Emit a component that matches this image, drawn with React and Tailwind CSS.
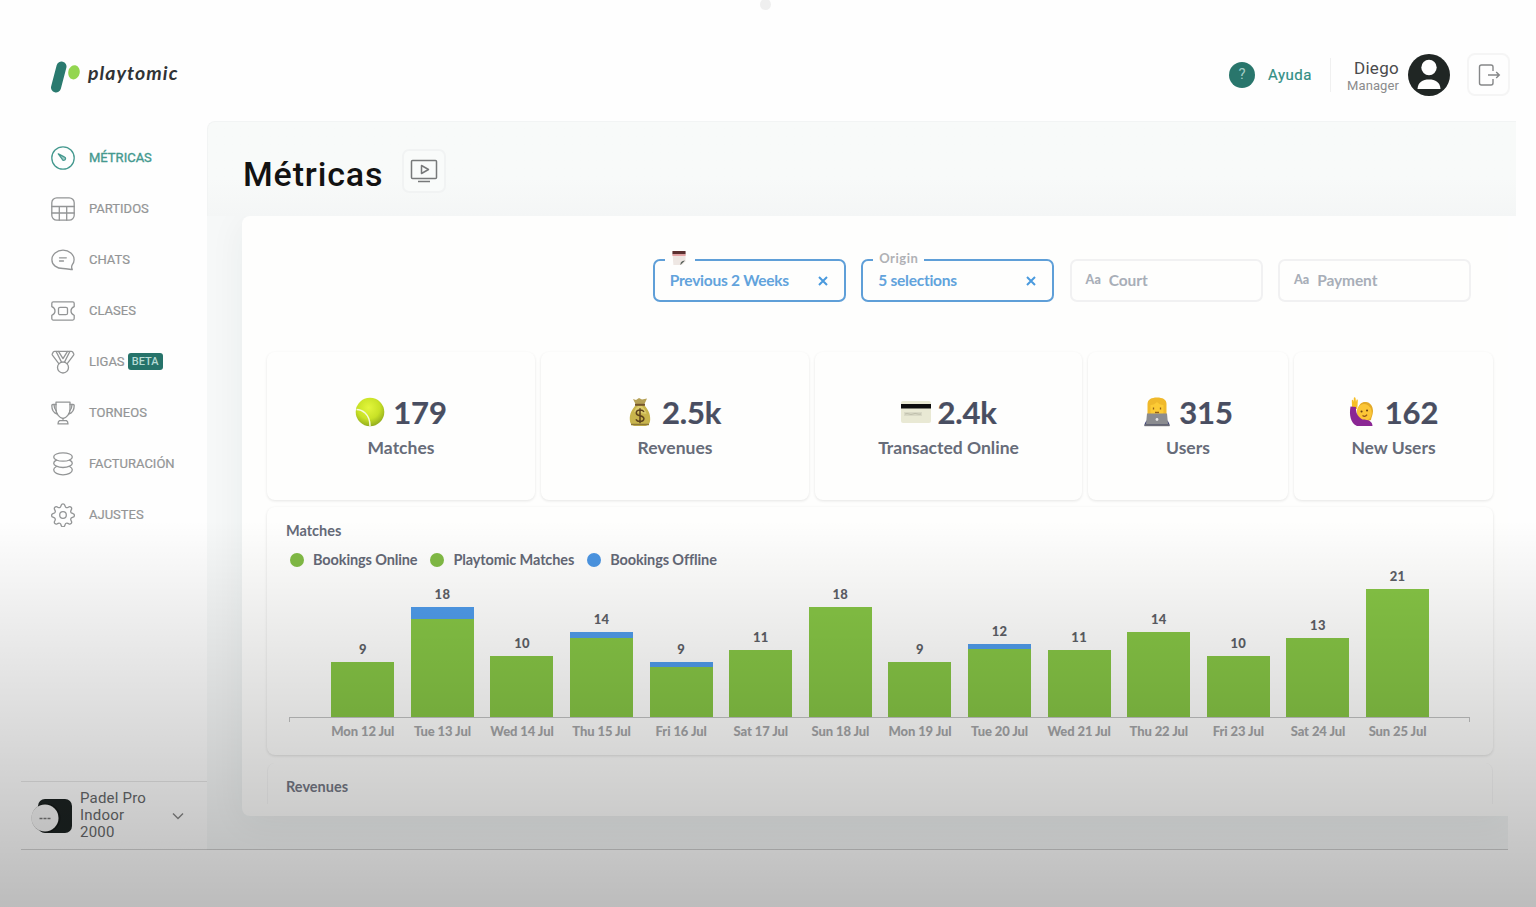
import React from "react";

const DAYS = [
  ["Mon 12 Jul", 9, 0],
  ["Tue 13 Jul", 18, 2],
  ["Wed 14 Jul", 10, 0],
  ["Thu 15 Jul", 14, 1],
  ["Fri 16 Jul", 9, 0.8],
  ["Sat 17 Jul", 11, 0],
  ["Sun 18 Jul", 18, 0],
  ["Mon 19 Jul", 9, 0],
  ["Tue 20 Jul", 12, 0.8],
  ["Wed 21 Jul", 11, 0],
  ["Thu 22 Jul", 14, 0],
  ["Fri 23 Jul", 10, 0],
  ["Sat 24 Jul", 13, 0],
  ["Sun 25 Jul", 21, 0],
];
const UNIT = 6.1;

function Icon({ children, className = "size-6" }) {
  return (
    <svg viewBox="0 0 24 24" className={className} fill="none" stroke="currentColor" strokeWidth="1.3" strokeLinecap="round" strokeLinejoin="round">
      {children}
    </svg>
  );
}

const ICONS = {
  gauge: (
    <>
      <circle cx="12" cy="12" r="11.2" />
      <path d="M7.3 7.8l5.9 3a1.8 1.8 0 1 1-2.2 2.1z" fill="currentColor" fillOpacity=".5" />
    </>
  ),
  table: (
    <>
      <rect x=".8" y=".8" width="22.4" height="22.4" rx="5" />
      <path d="M.8 9.5h22.4M.8 16h22.4M8.3 9.5v13.7M15.7 9.5v13.7" />
    </>
  ),
  chat: (
    <>
      <path d="M21 20.8c-.6-1.3-.4-2.7.2-3.9 1.2-1.5 1.9-3.2 1.9-5.1C23.100 6.300 18.200 2.200 12 2.200S.9 6.300.9 11.700 5.800 20.500 12 20.500c3 0 5.900.7 9.300 1.200z" />
      <path d="M8.500 9.800h6.800M8.500 13h4" />
    </>
  ),
  ticket: (
    <>
      <path d="M2.300 2.900h19.400c.9 0 1.500.7 1.500 1.500v3.300c-4.300 1.700-4.300 6.900 0 8.600v3.300c0 .8-.6 1.500-1.500 1.500H2.300c-.9 0-1.500-.7-1.500-1.500v-3.300c4.300-1.700 4.300-6.900 0-8.600V4.400c0-.8.6-1.500 1.500-1.500z" />
      <rect x="7.500" y="8.300" width="9" height="7.400" rx="1.500" />
    </>
  ),
  medal: (
    <>
      <circle cx="12" cy="17.500" r="5.500" />
      <path d="M7.800 13.700L1.400 5.200c-.4-.6-.3-1.100 0-1.600l1-1.700c.3-.4.7-.6 1.200-.6h16.800c.5 0 .9.200 1.200.6l1 1.700c.3.500.4 1 0 1.600l-6.400 8.500M5 1.300l5.400 10.600M19 1.300l-5.400 10.600M7.500 1.300L12 8.600l4.500-7.300" />
    </>
  ),
  trophy: (
    <>
      <path d="M5 1.200h14v7c0 4.800-3.500 8.500-7 9.300-3.500-.8-7-4.500-7-9.300zM12 17.500v2.200M8.500 19.700h7c1 .5 1.500 1.800 1.500 3.200H7c0-1.400.5-2.700 1.500-3.200z" />
      <path d="M5 3.500H1.900c-.7 0-1.100.4-1.100 1.100 0 4 1.600 7.400 5.400 8.400M19 3.500h3.100c.7 0 1.100.4 1.100 1.100 0 4-1.600 7.400-5.400 8.400M3 3.500c0 3 .8 5 2.300 6.500M21 3.500c0 3-.8 5-2.300 6.500" />
    </>
  ),
  coins: (
    <>
      <ellipse cx="12" cy="5" rx="9.300" ry="4.200" />
      <path d="M5.500 8.200c-1.800.8-2.800 1.900-2.800 3 0 2.300 4.200 4.300 9.300 4.300s9.300-2 9.300-4.300c0-1.100-1-2.200-2.800-3M5.500 14.500c-1.800.8-2.800 2-2.800 3.300 0 2.900 4.200 5 9.300 5s9.300-2.100 9.300-5c0-1.300-1-2.500-2.800-3.300" />
    </>
  ),
  gear: (
    <>
      <circle cx="12" cy="12" r="3.300" />
      <path d="M10.200 2.200a1.900 1.900 0 0 1 3.600 0l.4 1.200a1.900 1.900 0 0 0 2.600 1.100l1.200-.6a1.900 1.900 0 0 1 2.500 2.500l-.6 1.200a1.900 1.900 0 0 0 1.100 2.600l1.100.4a1.900 1.900 0 0 1 0 3.600l-1.200.4a1.900 1.900 0 0 0-1 2.600l.6 1.200a1.900 1.900 0 0 1-2.500 2.500l-1.200-.6a1.900 1.900 0 0 0-2.600 1.100l-.4 1.100a1.900 1.900 0 0 1-3.600 0l-.4-1.200a1.900 1.900 0 0 0-2.600-1l-1.200.6A1.900 1.900 0 0 1 3.500 18.400l.6-1.200A1.900 1.900 0 0 0 3 14.600l-1.100-.4a1.900 1.900 0 0 1 0-3.600L3.100 10.200a1.900 1.900 0 0 0 1-2.600l-.6-1.200A1.900 1.900 0 0 1 6 3.900l1.200.6a1.900 1.900 0 0 0 2.600-1.100z" />
    </>
  ),
};

const NAV = [
  ["gauge", "MÉTRICAS"],
  ["table", "PARTIDOS"],
  ["chat", "CHATS"],
  ["ticket", "CLASES"],
  ["medal", "LIGAS"],
  ["trophy", "TORNEOS"],
  ["coins", "FACTURACIÓN"],
  ["gear", "AJUSTES"],
];

function Ball() {
  return (
    <svg viewBox="0 0 30 30" className="w-[30px] h-[30px]">
      <defs>
        <radialGradient id="ball" cx=".45" cy=".35" r=".65">
          <stop offset="0" stopColor="#e3f63c" />
          <stop offset=".6" stopColor="#c9e226" />
          <stop offset="1" stopColor="#93ad1e" />
        </radialGradient>
      </defs>
      <circle cx="15" cy="15" r="14.300" fill="url(#ball)" />
      <path d="M1.500 12.500c5 0 13.500 4 13.500 16.500" fill="none" stroke="#f6fadc" strokeWidth="1.500" />
    </svg>
  );
}
function MoneyBag() {
  return (
    <svg viewBox="0 0 22 30" className="w-[22px] h-[30px]">
      <path d="M4 2l3 1 3-2 3 1.500L18 1.500 15 8H7z" fill="#b5a055" />
      <path d="M7 8h8c4 4 6.500 9 6.200 14.500-.2 5-2.700 6.500-6.200 6.500H7c-3.500 0-6-1.500-6.200-6.500C.5 17 3 12 7 8z" fill="#c8b44c" />
      <path d="M5 15c1-3 2.500-5 4-6h4c2 2 4 5 4.500 8" fill="#dccb6d" />
      <path d="M6 7.800h10" stroke="#73552c" strokeWidth="2" />
      <path d="M15 14.800c-1-1.500-2.500-1.700-4-1.700-2 0-3.700 1-3.700 2.800 0 4 7.600 1.700 7.600 5.700 0 1.900-1.800 2.900-3.900 2.900-1.800 0-3.300-.6-4.100-2.200M11 11.300v15" fill="none" stroke="#5d421c" strokeWidth="1.500" />
      <path d="M2 27.500h18" stroke="#8d7936" strokeWidth="1.500" />
    </svg>
  );
}
function Card() {
  return (
    <svg viewBox="0 0 32 24" className="w-[32px] h-[24px]">
      <rect x="1" y="1" width="30" height="22" rx="2" fill="#e9e9d4" />
      <path d="M1 4h30v4.500H1z" fill="#0d0d0d" />
      <path d="M4 12h18v4H4z" fill="#d9d9c6" />
      <path d="M5 14c3-1.500 5 1.500 8 0s5 1 8 0" stroke="#b5b5a2" fill="none" strokeWidth=".8" />
    </svg>
  );
}
function Technologist() {
  return (
    <svg viewBox="0 0 28 30" className="w-[28px] h-[30px]">
      <path d="M4.500 18V7c0-4.500 4-6.500 9.500-6.500S23.500 2.500 23.500 7v11z" fill="#f0b92b" />
      <path d="M7.500 8c3 0 4.500-1 6.500-3 2 2 3.500 3 6.500 3v7c0 3-3 5-6.500 5s-6.500-2-6.500-5z" fill="#fccb35" />
      <path d="M10.500 10.500v2M17.500 10.500v2M12 15.500h4" stroke="#936018" strokeWidth="1.300" />
      <path d="M1.500 29c0-4 2-6 4.500-7h16c2.500 1 4.500 3 4.500 7z" fill="#41477a" />
      <path d="M4 16.500h20l1 10.500H3z" fill="#8b8c90" />
      <path d="M1.500 27.200h25v2h-25z" fill="#6c6d76" />
      <circle cx="14" cy="22.500" r="1.400" fill="#e4e4e6" />
    </svg>
  );
}
function HandRaised() {
  return (
    <svg viewBox="0 0 28 30" className="w-[28px] h-[30px]">
      <path d="M3 10L2.800 3.500c0-1 1.200-1.200 1.500-.3L4.800 5V1c0-1 1.500-1 1.700 0L7 5l.5-2c.4-.8 1.500-.4 1.300.5L8.500 9 8 12H4z" fill="#f6be25" />
      <path d="M9 12c1-5 4-7.500 8-7 4 .4 7 4 7 9 0 4-2 7-2 9l-7 2z" fill="#e3aa28" />
      <ellipse cx="15.500" cy="15.500" rx="7.500" ry="8.500" fill="#fcc636" transform="rotate(-14 15 16.500)" />
      <path d="M1.500 9.500l5.500.5c-.5 6 2 10 6.500 12.500 6 0 10 2 10 6.500H8C1.500 26 0 18 1.500 9.500z" fill="#8b2794" />
      <path d="M12.500 14.500h.1M18 13.500h.1" stroke="#6f4415" strokeWidth="2" strokeLinecap="round" />
      <path d="M13.500 18.500c1.600 1.200 3.400.8 4.600-.8" fill="none" stroke="#955319" strokeWidth="1.200" />
    </svg>
  );
}

const KPIS = [
  { icon: <Ball />, value: "179", label: "Matches", w: "w-[268px]", gap: "gap-[8px]" },
  { icon: <MoneyBag />, value: "2.5k", label: "Revenues", w: "w-[268px]", gap: "gap-[11px]" },
  { icon: <Card />, value: "2.4k", label: "Transacted Online", w: "w-[267px]", gap: "gap-[5px]" },
  { icon: <Technologist />, value: "315", label: "Users", w: "w-[200px]", gap: "gap-[8px]" },
  { icon: <HandRaised />, value: "162", label: "New Users", w: "w-[199px]", gap: "gap-[8px]" },
];

function Close() {
  return (
    <svg viewBox="0 0 10 10" className="size-[10px]" stroke="#4a9ade" strokeWidth="2">
      <path d="M1 1l8 8M9 1L1 9" />
    </svg>
  );
}

function ActiveFilter({ legend, value }) {
  return (
    <div className="relative flex h-[43px] w-[193px] items-center justify-between rounded-[7px] border-2 border-[#5f9fd8] pl-[15px] pr-[16px]">
      {legend}
      <span className="text-[15.500px] font-bold tracking-[-0.25px] text-[#62a3dc]">{value}</span>
      <Close />
    </div>
  );
}

function EmptyFilter({ label }) {
  return (
    <div className="flex h-[43px] w-[193px] items-center gap-[8px] rounded-[7px] border-2 border-[#f1f1f2] pl-[14px] text-[#a8aeb8]">
      <span className="text-[12.500px] font-black">Aa</span>
      <span className="text-[15.500px] font-bold tracking-[-0.1px]">{label}</span>
    </div>
  );
}

function Legend({ color, children }) {
  return (
    <div className="flex items-center gap-[9px]">
      <span className={`size-[14px] rounded-full ${color}`} />
      <span>{children}</span>
    </div>
  );
}

export default function App() {
  return (
    <div className="relative flex h-[907px] w-[1536px] flex-col overflow-hidden bg-[#fefefe] font-['Roboto',sans-serif]">
      <div className="absolute left-[760px] top-[-1px] size-[11px] rounded-full bg-[#efefef]" />

      <header className="flex h-[121px] shrink-0 items-center justify-between pl-[50px] pr-[26px] pt-[28px]">
        <div className="flex items-center gap-[8px] pt-[5px]">
          <svg viewBox="0 0 30 32" className="h-[32px] w-[30px]">
            <path d="M11.500 5.500L6 26.500" stroke="#2a7a6f" strokeWidth="10" strokeLinecap="round" />
            <ellipse cx="24" cy="11.300" rx="5.700" ry="7.200" fill="#93d650" transform="rotate(12 24 11.300)" />
          </svg>
          <span className="-mt-[9px] font-['Lato',sans-serif] text-[19.500px] font-bold italic leading-none tracking-[1.05px] text-[#303335]">playtomic</span>
        </div>
        <div className="flex items-center">
          <span className="flex size-[26px] items-center justify-center rounded-full bg-[#29766c] text-[15px] text-[#a4cdc6]">?</span>
          <span className="ml-[13px] w-[62px] pt-[2px] text-[15px] tracking-[0.5px] text-[#338f85]" style={{ WebkitTextStroke: "0.2px" }}>Ayuda</span>
          <div className="h-[34px] w-px bg-[#f0f0f0]" />
          <div className="flex w-[68px] flex-col items-end pt-[3px]">
            <span className="text-[17px] leading-[18px] tracking-[0.3px] text-[#4a4a4c]">Diego</span>
            <span className="text-[13px] leading-[17px] tracking-[0.1px] text-[#8b8b8c]">Manager</span>
          </div>
          <svg viewBox="0 0 42 42" className="ml-[9px] size-[42px]">
            <circle cx="21" cy="21" r="21" fill="#202624" />
            <circle cx="21" cy="13.500" r="7.700" fill="#fefefe" />
            <path d="M9.500 35c.5-7 5-9.500 11.500-9.500S32 28 32.500 35z" fill="#fefefe" />
          </svg>
          <div className="ml-[17px] flex size-[43px] items-center justify-center rounded-[8px] border-2 border-[#f5f5f5] text-[#858788]">
            <svg viewBox="0 0 24 24" className="size-6" fill="none" stroke="currentColor" strokeWidth="1.400">
              <path d="M16 8V4c0-1.100-.8-2-2-2H4.500c-1.200 0-2 .9-2 2v16c0 1.100.8 2 2 2H14c1.200 0 2-.9 2-2v-4M11 12h11.500M19.200 8.900l3.100 3.100-3.100 3.100" />
            </svg>
          </div>
        </div>
      </header>

      <div className="flex h-[729px] shrink-0">
        <aside className="flex w-[207px] shrink-0 flex-col justify-between pl-[21px]">
          <nav className="flex flex-col pt-[11px]">
            {NAV.map(([icon, label], i) => (
              <a key={label} className={`flex h-[51.100px] items-center pl-[30px] ${i === 0 ? "text-[#45998f]" : "text-[#939596]"}`}>
                <Icon>{ICONS[icon]}</Icon>
                <span className="ml-[14px] text-[13px]" style={{ WebkitTextStroke: i === 0 ? "0.35px" : "0.2px" }}>{label}</span>
                {label === "LIGAS" && (
                  <span className="ml-[3px] flex h-[17px] w-[35px] items-center justify-center rounded-[3px] bg-[#26736a] text-[11px] font-medium text-[#b5dbd5]">BETA</span>
                )}
              </a>
            ))}
          </nav>
          <div className="flex h-[69px] items-center border-y border-t-[#e6e6e6] border-b-[#d4d4d4] pl-[10px]">
            <svg viewBox="0 0 44 40" className="h-[40px] w-[44px]">
              <rect x="7" y="3" width="34" height="34" rx="7" fill="#1c2322" />
              <circle cx="15" cy="22" r="14.500" fill="#000000" fillOpacity=".3" />
              <circle cx="14" cy="22" r="13.500" fill="#f4f4f4" />
              <path d="M8.500 22.500h11" stroke="#777" strokeWidth="1.700" strokeDasharray="3 1" />
            </svg>
            <div className="ml-[5px] w-[90px] text-[15px] leading-[17px] tracking-[0.2px] text-[#66686a]">
              Padel Pro<br />Indoor<br />2000
            </div>
            <svg viewBox="0 0 12 8" className="ml-[2px] h-[8px] w-[12px]" fill="none" stroke="#888" strokeWidth="1.500">
              <path d="M1 1.500l5 5 5-5" />
            </svg>
          </div>
        </aside>

        <main className="flex w-[1309px] flex-col">
          <div className="flex h-[95px] w-[1309px] shrink-0 items-center gap-[19px] rounded-tl-[8px] border-l border-t border-[#f2f4f4] bg-gradient-to-b from-[#f8faf9] from-60% to-[#f4f6f6] pl-[35px] pt-[4px]">
            <h1 className="w-[140px] whitespace-nowrap pt-[6px] text-[34px] font-medium leading-none tracking-[0.85px] text-[#121212]">Métricas</h1>
            <div className="flex size-[44px] items-center justify-center rounded-[7px] border-2 border-[#f1f3f3] bg-[#f9fbfa] text-[#77797a]">
              <svg viewBox="0 0 28 24" className="h-[24px] w-[28px]" fill="none" stroke="currentColor" strokeWidth="1.500" strokeLinejoin="round">
                <rect x="1.500" y="1.500" width="25" height="18" rx="1" />
                <path d="M11.500 6.500v8l7-4zM8 22.500h12" />
              </svg>
            </div>
          </div>

          <div className="flex h-[634px] w-[1301px] flex-col overflow-hidden border-b border-[#cfcfcf] bg-[#f6f8f8] pl-[35px]">
            <section className="h-[600px] w-[1266px] rounded-l-[8px] bg-[#fefefd] pl-[25px] pt-[43px] font-['Lato',sans-serif] shadow-[0_6px_36px_rgba(30,50,50,0.06)]">
              <div className="flex justify-end gap-[15.400px] pr-[37px]">
                <ActiveFilter
                  value="Previous 2 Weeks"
                  legend={
                    <span className="absolute left-[10px] top-[-10px] flex w-[30px] justify-center bg-[#fefefd]">
                      <svg viewBox="0 0 14 16" className="mr-[2px] h-[15px] w-[14px]">
                        <path d="M0 1h14v10l-4 4H1z" fill="#eee7e3" />
                        <path d="M0 0h14v3.500H0z" fill="#5c3030" />
                        <path d="M0 3.500h14v1.700H0z" fill="#e59a9c" />
                        <path d="M8.500 15c0-3 1-4.500 5-5z" fill="#57605a" />
                      </svg>
                    </span>
                  }
                />
                <ActiveFilter
                  value="5 selections"
                  legend={<span className="absolute left-[10px] top-[-11px] bg-[#fefefd] px-[6px] text-[13px] font-bold leading-[16px] tracking-[0.5px] text-[#b0b1b5]">Origin</span>}
                />
                <EmptyFilter label="Court" />
                <EmptyFilter label="Payment" />
              </div>

              <div className="mt-[50px] flex gap-[6px]">
                {KPIS.map((k) => (
                  <div key={k.label} className={`flex h-[148px] flex-col items-center rounded-[8px] pt-[43px] shadow-[0_1px_3px_rgba(0,0,0,0.1)] ${k.w}`}>
                    <div className={`flex h-[34px] items-center ${k.gap}`}>
                      {k.icon}
                      <span className="text-[31px] font-bold leading-[34px] tracking-[-0.2px] text-[#494e61]" style={{ WebkitTextStroke: "0.2px" }}>{k.value}</span>
                    </div>
                    <span className="mt-[8px] text-[17.500px] font-bold leading-[22px] text-[#676c79]">{k.label}</span>
                  </div>
                ))}
              </div>

              <div className="mt-[7px] flex h-[248px] w-[1226px] flex-col rounded-[8px] pl-[19px] pt-[14px] shadow-[0_1px_3px_rgba(0,0,0,0.12)]">
                <h2 className="text-[14.500px] font-bold leading-[20px] text-[#656a78]">Matches</h2>
                <div className="mt-[9px] flex h-[20px] items-center gap-[13px] pl-[4px] text-[14.500px] font-bold tracking-[-0.12px] text-[#646876]">
                  <Legend color="bg-[#81bb45]">Bookings Online</Legend>
                  <Legend color="bg-[#81bb45]">Playtomic Matches</Legend>
                  <Legend color="bg-[#4b95e2]">Bookings Offline</Legend>
                </div>
                <div className="ml-[4px] flex h-[147px] w-[1180px] items-end pl-[33px]">
                  {DAYS.map(([day, total, offline]) => (
                    <div key={day} className="flex w-[79.600px] flex-col items-center">
                      <span className="mb-[5px] text-[13px] font-black leading-[16px] tracking-[0.3px] text-[#5d6066]">{total}</span>
                      <div className="w-[63px] bg-[#4f9bea]" style={{ height: offline * UNIT }} />
                      <div className="w-[63px] bg-[#86c545]" style={{ height: (total - offline) * UNIT }} />
                    </div>
                  ))}
                </div>
                <div className="ml-[3px] h-[5px] w-[1181px] border-x border-t border-[#c2c3c3]" />
                <div className="ml-[4px] flex w-[1180px] pl-[33px] pt-[1px]">
                  {DAYS.map(([day]) => (
                    <span key={day} className="w-[79.600px] whitespace-nowrap text-center text-[13px] font-black leading-[17px] tracking-[-0.1px] text-[#a5a6a8]">{day}</span>
                  ))}
                </div>
              </div>

              <div className="mt-[8px] h-[41px] w-[1226px] overflow-hidden rounded-t-[8px] border-x border-[#f5f5f5] pl-[18px] pt-[14px]">
                <h2 className="text-[14.500px] font-bold leading-[20px] text-[#757986]">Revenues</h2>
              </div>
            </section>
          </div>
        </main>
      </div>

      <div className="pointer-events-none absolute inset-x-0 bottom-0 h-[387px] bg-gradient-to-b from-[rgba(0,0,0,0)] to-[rgba(0,0,0,0.26)]" />
    </div>
  );
}
